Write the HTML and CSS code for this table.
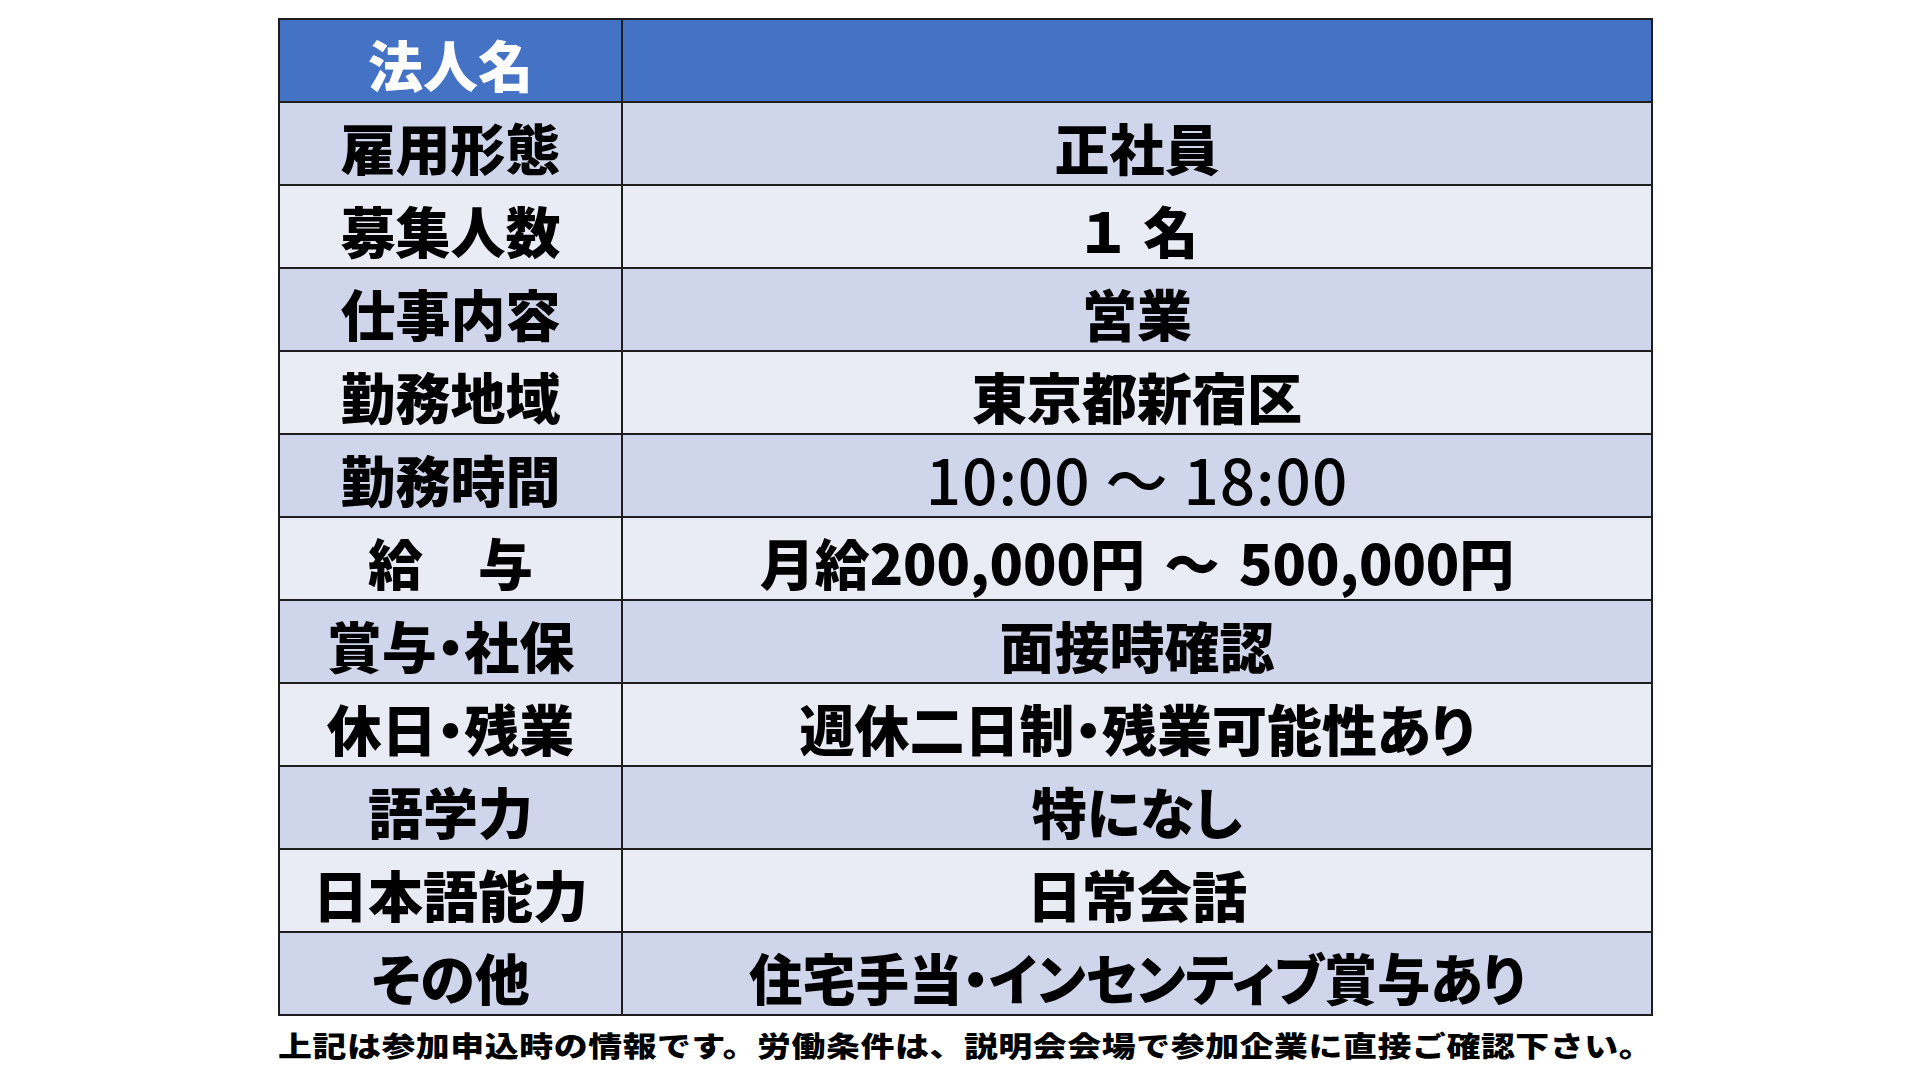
FILE: index.html
```html
<!DOCTYPE html>
<html lang="ja">
<head>
<meta charset="utf-8">
<title>求人情報</title>
<link rel="stylesheet" href="styles.css">
</head>
<body>
<div class="page">
  <table class="info">
    <colgroup><col class="c-label"><col class="c-value"></colgroup>
    <tr class="head"><th>法人名</th><td></td></tr>
    <tr><th>雇用形態</th><td>正社員</td></tr>
    <tr><th>募集人数</th><td class="count">１ 名</td></tr>
    <tr><th>仕事内容</th><td>営業</td></tr>
    <tr><th>勤務地域</th><td>東京都新宿区</td></tr>
    <tr><th>勤務時間</th><td class="time">10:00 ～ 18:00</td></tr>
    <tr><th>給　与</th><td class="salary">月給200,000円 ～ 500,000円</td></tr>
    <tr><th>賞与・社保</th><td>面接時確認</td></tr>
    <tr><th>休日・残業</th><td>週休二日制・残業可能性あり</td></tr>
    <tr><th>語学力</th><td>特になし</td></tr>
    <tr><th>日本語能力</th><td>日常会話</td></tr>
    <tr><th>その他</th><td><span class="narrow">住宅手当・インセンティブ賞与あり</span></td></tr>
  </table>
  <p class="note"><span>上記は参加申込時の情報です。労働条件は、説明会会場で参加企業に直接ご確認下さい。</span></p>
</div>
</body>
</html>
```

FILE: styles.css
```css
html, body {
  margin: 0;
  padding: 0;
  background: #ffffff;
}

body {
  font-family: "Noto Sans CJK JP", "Noto Sans", sans-serif;
  color: #000000;
}

.page {
  width: 1920px;
  height: 1080px;
  padding: 18px 0 0 278px;
  box-sizing: border-box;
  overflow: hidden;
}

.info {
  border-collapse: collapse;
  table-layout: fixed;
  width: 1375px;
}

.c-label { width: 343px; }

.info th,
.info td {
  border: 2px solid #1e1e1e;
  height: 83px;
  padding: 5px 0 0 0;
  text-align: center;
  vertical-align: middle;
  font-size: 55px;
  font-weight: 900;
  line-height: 1;
  font-feature-settings: "palt";
  white-space: nowrap;
  box-sizing: border-box;
}

.info tr:nth-child(even) th,
.info tr:nth-child(even) td {
  background: #cfd5ea;
}

.info tr:nth-child(odd) th,
.info tr:nth-child(odd) td {
  background: #e9ebf5;
}

.info tr.head th,
.info tr.head td {
  background: #4472c4;
  color: #ffffff;
}

.info td.count {
  font-feature-settings: normal;
}

.info td.time {
  font-weight: 500;
  font-size: 62px;
  letter-spacing: 1px;
  font-feature-settings: normal;
}

.info td.salary {
  font-feature-settings: normal;
  word-spacing: 7px;
}

.narrow {
  display: inline-block;
  transform: scaleX(0.97);
}

.note {
  margin: 11px 0 0 0;
  font-size: 30px;
  font-weight: 900;
  line-height: 36px;
  white-space: nowrap;
}

.note span {
  display: inline-block;
  letter-spacing: 0.5px;
  transform: scale(1.13, 0.95);
  transform-origin: left center;
}
```
